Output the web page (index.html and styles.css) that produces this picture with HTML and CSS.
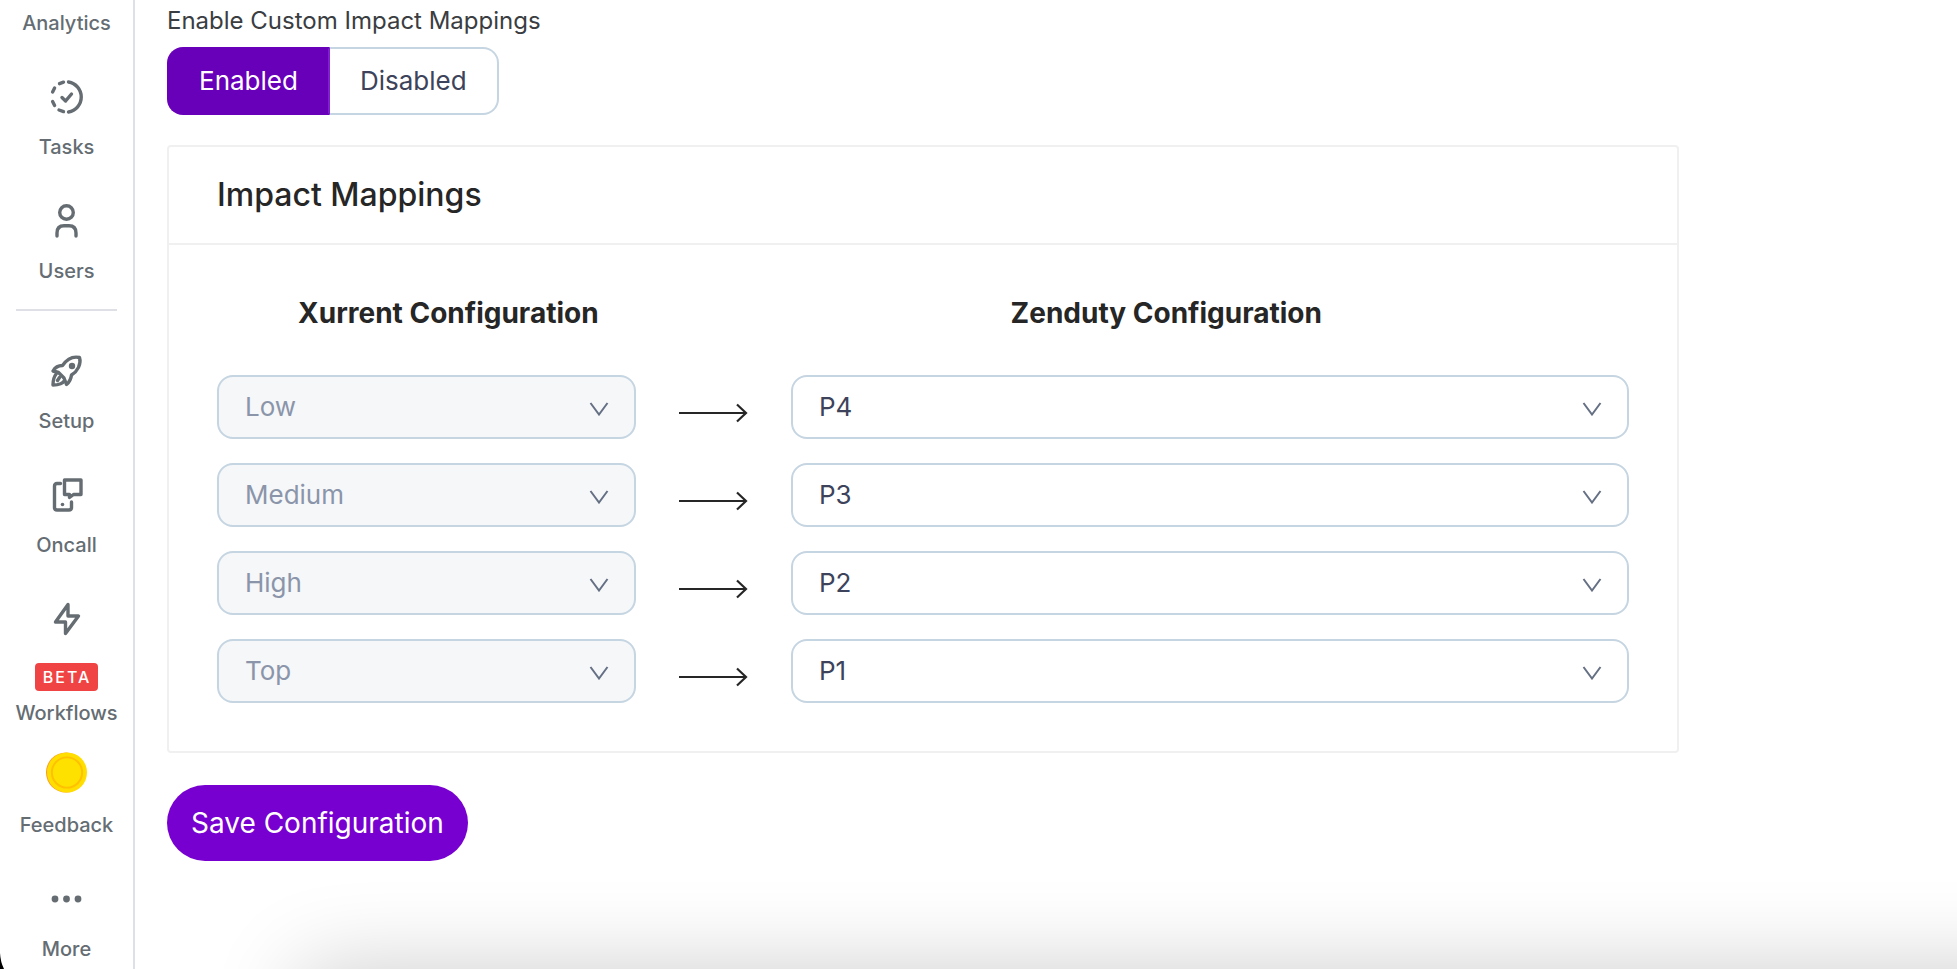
FILE: index.html
```html
<!DOCTYPE html>
<html lang="en">
    <head>
        <meta charset="utf-8">
        <meta name="viewport" content="width=device-width, initial-scale=1">
        <title>Impact Mappings</title>
        <link rel="stylesheet" href="styles.css">
    </head>
    <body>
        <svg class="defs" aria-hidden="true">
            <symbol id="chevron" viewBox="0 0 20 14">
                <path d="M1.5 1 L10 12.5 L18.500 1" fill="none" stroke="currentColor" stroke-width="2"/>
            </symbol>
            <symbol id="arrow" viewBox="0 0 69 20">
                <path d="M0 10 H67 M58 1.500 L67 10 L58 18.500" fill="none" stroke="currentColor" stroke-width="2.200"/>
            </symbol>
        </svg>

        <nav class="sidebar">
            <a class="nav-item" href="#">Analytics</a>
            <a class="nav-item" href="#">
                <svg class="icon" viewBox="1 0 36 36">
                    <path d="M20.500 3 A15.200 15.200 0 0 1 20.500 33"/>
                    <path d="M15.500 3.200 L11.500 4.700 M6.600 9 L4.600 13 M4.600 22.500 L6.600 26.500 M11 31 L15.500 32.600"/>
                    <path d="M14 18.500 L17.600 22 L23.500 15"/>
                </svg>
                Tasks
            </a>
            <a class="nav-item" href="#">
                <svg class="icon" viewBox="1 0 36 36">
                    <circle cx="18.500" cy="9.500" r="6.800"/>
                    <path d="M9 33 V30 Q9 22.800 16 22.800 H21 Q28 22.800 28 30 V33"/>
                </svg>
                Users
            </a>
            <hr class="divider">
            <a class="nav-item" href="#">
                <svg class="icon" viewBox="1 0 36 36">
                    <path d="M14.500 12.500 C19 6 25 3 31.500 4.500 C33.500 11 29.500 18.500 23.500 22 C23 26 21.500 29 18.500 31.500 L16 25 L10.500 19.500 L5 18 C7 14.500 10 12.500 14.500 12.500 Z"/>
                    <path d="M8.500 20.500 C6 23.500 5 27.500 5 32 C9.500 32 14.500 31 16.500 27.500 M11.500 24.500 L9.500 27.500"/>
                    <circle class="dot" cx="24" cy="13" r="3.200"/>
                </svg>
                Setup
            </a>
            <a class="nav-item" href="#">
                <svg class="icon" viewBox="1 0 36 36">
                    <path d="M13.500 6.500 H10 Q7.500 6.500 7.500 9 V30.500 Q7.500 33 10 33 H22 Q24.500 33 24.500 30.500 V25"/>
                    <path d="M17.500 3 H34 V17.500 H26.500 L22.500 20.500 V17.500 H17.500 Z"/>
                    <circle class="dot" cx="15.500" cy="27.500" r="1.800"/>
                </svg>
                Oncall
            </a>
            <a class="nav-item beta" href="#">
                <svg class="icon" viewBox="1 0 36 36">
                    <path d="M20 3.500 L7.500 21 H17.500 V32.500 L30.500 15 H20 Z"/>
                </svg>
                <span class="badge">BETA</span>
                Workflows
            </a>
            <a class="nav-item" href="#">
                <svg class="coin" viewBox="0 0 42 42">
                    <circle cx="20.500" cy="21" r="20.500" fill="#ff9a1f"/>
                    <circle cx="21.500" cy="21" r="20.500" fill="#ffde00"/>
                    <circle cx="21.500" cy="21" r="15.500" fill="#ffe100" stroke="#ffc000" stroke-width="2"/>
                </svg>
                Feedback
            </a>
            <a class="nav-item" href="#">
                <svg class="icon" viewBox="1 0 36 36">
                    <circle class="dot" cx="7" cy="18" r="3.400"/>
                    <circle class="dot" cx="18.500" cy="18" r="3.400"/>
                    <circle class="dot" cx="30" cy="18" r="3.400"/>
                </svg>
                More
            </a>
        </nav>

        <main class="content">
            <form class="form">
                <fieldset class="toggle-field">
                    <legend>Enable Custom Impact Mappings</legend>
                    <div class="toggle">
                        <input type="radio" name="custom" id="enabled" checked>
                        <label for="enabled">Enabled</label>
                        <input type="radio" name="custom" id="disabled">
                        <label for="disabled">Disabled</label>
                    </div>
                </fieldset>

                <section class="card">
                    <h2 class="card-title">Impact Mappings</h2>
                    <div class="card-body">
                        <div class="headings">
                            <h3>Xurrent Configuration</h3>
                            <h3>Zenduty Configuration</h3>
                        </div>
                        <div class="mapping">
                            <div class="select">
                                <select aria-label="Xurrent impact 1" disabled><option>Low</option></select>
                                <svg class="chevron"><use href="#chevron"/></svg>
                            </div>
                            <svg class="arrow"><use href="#arrow"/></svg>
                            <div class="select">
                                <select aria-label="Zenduty priority for Low"><option>P4</option></select>
                                <svg class="chevron"><use href="#chevron"/></svg>
                            </div>
                        </div>
                        <div class="mapping">
                            <div class="select">
                                <select aria-label="Xurrent impact 2" disabled><option>Medium</option></select>
                                <svg class="chevron"><use href="#chevron"/></svg>
                            </div>
                            <svg class="arrow"><use href="#arrow"/></svg>
                            <div class="select">
                                <select aria-label="Zenduty priority for Medium"><option>P3</option></select>
                                <svg class="chevron"><use href="#chevron"/></svg>
                            </div>
                        </div>
                        <div class="mapping">
                            <div class="select">
                                <select aria-label="Xurrent impact 3" disabled><option>High</option></select>
                                <svg class="chevron"><use href="#chevron"/></svg>
                            </div>
                            <svg class="arrow"><use href="#arrow"/></svg>
                            <div class="select">
                                <select aria-label="Zenduty priority for High"><option>P2</option></select>
                                <svg class="chevron"><use href="#chevron"/></svg>
                            </div>
                        </div>
                        <div class="mapping">
                            <div class="select">
                                <select aria-label="Xurrent impact 4" disabled><option>Top</option></select>
                                <svg class="chevron"><use href="#chevron"/></svg>
                            </div>
                            <svg class="arrow"><use href="#arrow"/></svg>
                            <div class="select">
                                <select aria-label="Zenduty priority for Top"><option>P1</option></select>
                                <svg class="chevron"><use href="#chevron"/></svg>
                            </div>
                        </div>
                    </div>
                </section>

                <button class="save" type="button">Save Configuration</button>
            </form>
        </main>

        <div class="bottom-shadow"></div>
        <svg class="corner" viewBox="0 0 4 16"><path d="M0 0 Q0.500 9 4 16 H0 Z"/></svg>
    </body>
</html>
```

FILE: styles.css
```css
* { box-sizing: border-box; }
html, body { margin: 0; padding: 0; }
body {
    display: flex;
    min-height: 100vh;
    background: #fff;
    color: #262626;
    font-family: Inter, "Liberation Sans", sans-serif;
    overflow-x: hidden;
}
.defs { display: none; }

/* sidebar */
.sidebar {
    flex: none;
    width: 135px;
    padding: 11px 0 8px;
    border-right: 2px solid #dfdfe6;
    display: flex;
    flex-direction: column;
    align-items: center;
}
.nav-item {
    display: flex;
    flex-direction: column;
    align-items: center;
    gap: 20px;
    margin-bottom: 44px;
    color: #656d73;
    font-size: 20px;
    font-weight: 500;
    line-height: 24px;
    text-decoration: none;
}
.nav-item:last-child { margin-bottom: 0; }
.icon {
    width: 36px;
    height: 36px;
    fill: none;
    stroke: #656d73;
    stroke-width: 3.4;
    stroke-linecap: round;
    stroke-linejoin: round;
}
.icon .dot { fill: #656d73; stroke: none; }
.divider {
    width: 101px;
    margin: -18px 0 42px;
    border: 0;
    border-top: 2px solid #dfdfe6;
}
.beta { gap: 10px; margin-bottom: 27px; }
.badge {
    margin-top: 16px;
    padding: 0 7px 0 8px;
    border-radius: 4px;
    background: #f04444;
    color: #fff;
    font-size: 16px;
    line-height: 28px;
    letter-spacing: 2px;
}
.coin { width: 41px; height: 41px; }

/* form */
.content { flex: 1; min-width: 0; padding: 0 32px; }
.form { width: 86%; }
.toggle-field { margin: 0; padding: 0; border: 0; }
.toggle-field legend {
    padding: 0;
    color: #3a3d41;
    font-size: 24px;
    line-height: 42px;
    margin-bottom: 5px;
}
.toggle { display: flex; }
.toggle input { position: absolute; opacity: 0; }
.toggle label {
    padding: 0 30px;
    border: 2px solid #c6d5e2;
    color: #3d435a;
    font-size: 26px;
    line-height: 64px;
}
.toggle label:first-of-type { border-radius: 16px 0 0 16px; border-right: 0; }
.toggle label:last-of-type { border-radius: 0 16px 16px 0; border-left: 0; }
.toggle input:checked + label {
    background: #6800b9;
    border-color: #6800b9;
    border-right: 2px solid #8020d0;
    color: #fff;
}

.card {
    margin: 30px 0 32px;
    border: 2px solid #f0f0f0;
    border-radius: 4px;
}
.card-title {
    margin: 0;
    padding: 0 48px;
    border-bottom: 2px solid #f0f0f0;
    font-size: 32px;
    font-weight: 500;
    line-height: 96px;
}
.card-body {
    padding: 48px;
    display: flex;
    flex-direction: column;
    gap: 24px;
}
.headings {
    display: grid;
    grid-template-columns: 1fr 2fr;
    gap: 24px;
    margin-bottom: 18px;
    text-align: center;
}
.headings h3 { margin: 0; font-size: 28px; font-weight: 700; line-height: 40px; }
.mapping {
    display: grid;
    grid-template-columns: 1fr 155px 2fr;
    align-items: center;
}
.arrow { width: 69px; height: 32px; padding-top: 12px; justify-self: center; }
.select { position: relative; }
.select select {
    display: block;
    width: 100%;
    height: 64px;
    padding: 0 64px 2px 26px;
    border: 2px solid #c6d5e2;
    border-radius: 16px;
    appearance: none;
    background: #fff;
    color: #3d435a;
    font-family: inherit;
    font-size: 26px;
}
.select select:disabled { background: #f5f7f9; color: #8b95aa; opacity: 1; }
.chevron {
    position: absolute;
    right: 27px;
    top: 27px;
    width: 20px;
    height: 14px;
    color: #667085;
    pointer-events: none;
}
.save {
    display: block;
    height: 76px;
    padding: 0 24px;
    border: 0;
    border-radius: 38px;
    background: #7700d1;
    color: #fff;
    font-family: inherit;
    font-size: 28px;
}

/* shadow of the window below, and the rounded corner of this one */
.bottom-shadow {
    position: fixed;
    top: 100%;
    left: 300px;
    right: -200px;
    height: 200px;
    box-shadow: 0 0 90px rgba(0, 0, 0, 0.2);
    pointer-events: none;
}
.corner { position: fixed; left: 0; bottom: 0; width: 4px; height: 16px; }
```
